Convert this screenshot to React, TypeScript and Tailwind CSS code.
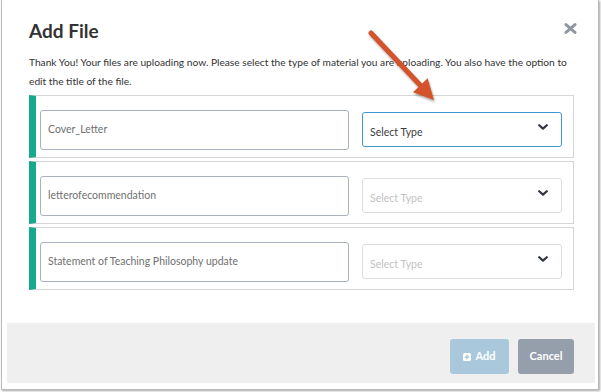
import React from 'react'

const files = ['Cover_Letter', 'letterofecommendation', 'Statement of Teaching Philosophy update']

function Chevron() {
  return (
    <svg width="10" height="6" viewBox="0 0 10 6" className="shrink-0">
      <path d="M1.2 1.2 L5 4.6 L8.8 1.2" fill="none" stroke="#2f3640" strokeWidth="2.2" strokeLinecap="round" strokeLinejoin="round" />
    </svg>
  )
}

function FileRow({ name, active }: { name: string; active: boolean }) {
  return (
    <div className="flex items-start h-[63px] border border-[#d6d6d6] border-l-[7px] border-l-[#16a98c] pl-[4px] pr-[10px] pt-[14px]">
      <div className="w-[309px] h-[40px] border border-[#a9b1bf] rounded-[3px] flex items-center pl-[7px] text-[10.5px] text-[#707070]">
        {name}
      </div>
      <div
        className={
          active
            ? 'ml-[13px] mt-[2px] w-[200px] h-[35px] border border-[#3d98cf] rounded-[3px] flex items-start justify-between pl-[7px] pr-[13px]'
            : 'ml-[13px] mt-[2px] w-[200px] h-[35px] border border-[#dedede] rounded-[3px] flex items-start justify-between pl-[7px] pr-[13px]'
        }
      >
        <span className={active ? 'mt-[12px] text-[10.5px] leading-[14px] text-[#3d3d3d]' : 'mt-[12px] text-[10.5px] leading-[14px] text-[#c2c2c2]'}>
          Select Type
        </span>
        <span className="mt-[11px]">
          <Chevron />
        </span>
      </div>
    </div>
  )
}

export default function App() {
  return (
    <div className="w-[601px] h-[392px] bg-white relative overflow-hidden" style={{ fontFamily: 'Lato, "Open Sans", sans-serif' }}>
      <div className="ml-[1px] w-[598px] h-[390px] bg-white border border-t-0 border-[#b9b9b9] shadow-[1px_1px_2px_rgba(0,0,0,0.35)] flex flex-col">
        <div className="pl-[27px] pr-[24px] pt-[19px]">
          <div className="flex items-start justify-between">
            <h1 className="text-[19px] leading-[24px] font-bold text-[#333333]">Add File</h1>
            <svg width="13" height="11" viewBox="0 0 13 11" className="mt-[4px] -mr-[3px]">
              <path d="M2 1.6 L11 9.4 M11 1.6 L2 9.4" stroke="#8f96a3" strokeWidth="3" strokeLinecap="round" />
            </svg>
          </div>
          <p className="mt-[10px] text-[10.2px] leading-[19px] text-[#333333]">
            Thank You! Your files are uploading now. Please select the type of material you are uploading. You also have the option to edit the title of the file.
          </p>
          <div className="mt-[4px] flex flex-col gap-[3px]">
            {files.map((f, i) => (
              <FileRow key={f} name={f} active={i === 0} />
            ))}
          </div>
        </div>
        <div className="mt-auto ml-[5px] mr-[3px] mb-[6px] h-[60px] bg-[#efefef] flex items-start justify-end gap-[9px] pt-[16px] pr-[21px]">
          <button className="w-[59px] h-[35px] rounded-[3px] bg-[#a9c8dc] flex items-center justify-center gap-[4px] text-white text-[11px] font-bold">
            <svg width="8" height="8" viewBox="0 0 8 8">
              <rect x="0" y="0" width="8" height="8" rx="1.5" fill="white" />
              <path d="M4 1.8 V6.2 M1.8 4 H6.2" stroke="#a9c8dc" strokeWidth="1.4" />
            </svg>
            Add
          </button>
          <button className="w-[56px] h-[35px] rounded-[3px] bg-[#959eab] text-white text-[11px] font-bold">Cancel</button>
        </div>
      </div>
      <svg width="601" height="392" className="absolute left-0 top-0 pointer-events-none drop-shadow-[1px_2px_1px_rgba(0,0,0,0.35)]">
        <path d="M371 33 L421 86" stroke="#d4532b" strokeWidth="5" strokeLinecap="round" />
        <path d="M434 100 L427.6 78.3 L413 92.3 Z" fill="#d4532b" />
      </svg>
    </div>
  )
}
